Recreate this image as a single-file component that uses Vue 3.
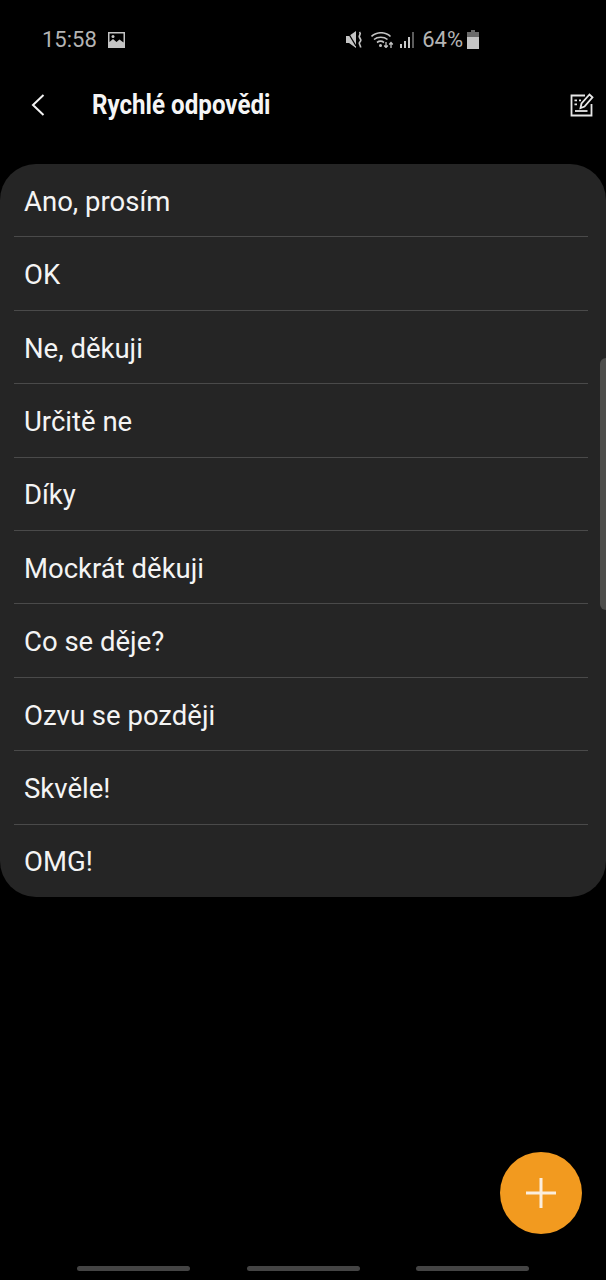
<script setup>
const replies = ['Ano, prosím', 'OK', 'Ne, děkuji', 'Určitě ne', 'Díky', 'Mockrát děkuji', 'Co se děje?', 'Ozvu se později', 'Skvěle!', 'OMG!']
</script>

<template>
  <div class="screen">
    <div class="status">
      <div class="status-left">
        <span class="time">15:58</span>
        <svg class="pic" width="17" height="16" viewBox="0 0 17 16">
          <path fill="#c4c4c4" fill-rule="evenodd" d="M0 0h17v16H0zM1.500 1.500v8.500l3.500-3 3.500 3 3-2.500 4 3V1.500z" />
          <circle cx="5" cy="4.500" r="1.500" fill="#c4c4c4" />
        </svg>
      </div>
      <div class="status-right">
        <svg width="17" height="17" viewBox="0 0 17 17" class="mute">
          <path fill="#c4c4c4" d="M0 5h3L10 0v17L3 12H0z" />
          <path fill="none" stroke="#000" stroke-width="1.300" d="M1 0l9 15" />
          <path fill="none" stroke="#c4c4c4" stroke-width="1.700" d="M13.500 1c2.500 2.500-1.500 3 0 5.500s2 2.500 0 5c-1 2 1.500 2.500 1 5" />
        </svg>
        <svg width="23" height="16" viewBox="0 0 23 16" class="wifi">
          <path fill="none" stroke="#c4c4c4" stroke-width="1.600" d="M.5 4.500c5-5 14-5 19 0M3 7.500c3.500-3 10-3 13.500 0M6 10.500c2-1.500 5-1.500 7 0" />
          <circle cx="9.500" cy="13.500" r="1.500" fill="#c4c4c4" />
          <path fill="none" stroke="#c4c4c4" stroke-width="1.300" d="M15 10v5.500M13.200 13.500l1.800 2 1.800-2M20 16v-5.500M18.200 12.500l1.800-2 1.800 2" />
        </svg>
        <svg width="14" height="16" viewBox="0 0 14 16" class="signal">
          <rect x="0" y="12" width="2" height="4" fill="#c8c8c8" />
          <rect x="4" y="9" width="2" height="7" fill="#c8c8c8" />
          <rect x="8" y="5" width="2" height="11" fill="#c8c8c8" />
          <rect x="12" y="0" width="2" height="16" fill="#5c5c5c" />
        </svg>
        <span class="pct">64%</span>
        <svg width="12" height="19" viewBox="0 0 12 19" class="batt">
          <path fill="#6a6a6a" d="M4 0h4v2h4v5H0V2h4z" />
          <path fill="#c4c4c4" d="M0 7h12v12H0z" />
        </svg>
      </div>
    </div>

    <header class="bar">
      <svg class="back" width="14" height="22" viewBox="0 0 14 22">
        <path fill="none" stroke="#f2f2f2" stroke-width="2" d="M12.500 1 2 11l10.500 10" />
      </svg>
      <h1 class="title">Rychlé odpovědi</h1>
      <svg class="edit" width="24" height="24" viewBox="0 0 24 24">
        <path fill="none" stroke="#e6e6e6" stroke-width="1.800" d="M15 2.500H1.500v20h20V11" />
        <path fill="none" stroke="#e6e6e6" stroke-width="1.800" d="M5 18h12.500" />
        <path fill="#e6e6e6" d="M4.500 6.500H7v1.800H4.500zM4.500 10.500H7v1.800H4.500zM9 6.500h2v1.800H9z" />
        <path fill="none" stroke="#e6e6e6" stroke-width="1.800" d="M10.500 15l1-4.500L19.500 1.500l3 2.800L14.500 13.500z" />
      </svg>
    </header>

    <ul class="card">
      <li v-for="r in replies" :key="r" class="row"><span class="label">{{ r }}</span></li>
    </ul>

    <div class="scrollbar"></div>

    <button class="fab" aria-label="Přidat">
      <svg width="30" height="30" viewBox="0 0 30 30">
        <path stroke="#fbeedd" stroke-width="3" d="M15 0v30M0 15h30" />
      </svg>
    </button>

    <div class="nav">
      <span class="pill"></span><span class="pill"></span><span class="pill"></span>
    </div>
  </div>
</template>

<style>
html, body { margin: 0; background: #000; }
</style>

<style scoped>
.screen {
  position: relative;
  width: 606px;
  height: 1280px;
  background: #000;
  overflow: hidden;
  font-family: Roboto, "Liberation Sans", sans-serif;
  color: #f2f2f2;
}
.status {
  height: 64px;
  padding: 16px 127px 0 42px;
  box-sizing: border-box;
  display: flex;
  justify-content: space-between;
  align-items: flex-start;
}
.status-left, .status-right { display: flex; align-items: center; height: 47px; }
.time { font-size: 22px; color: #b4b4b4; line-height: 47px; }
.pic { margin-left: 11px; }
.mute { margin-right: 8px; }
.signal { margin-left: 6px; margin-right: 8px; }
.pct { font-size: 22px; color: #b4b4b4; }
.batt { margin-left: 4px; }
.bar {
  height: 82px;
  padding: 0 12px 0 31px;
  display: flex;
  align-items: center;
  box-sizing: border-box;
}
.back { flex: none; }
.title {
  margin: 0 0 0 47px;
  flex: 1;
  font-size: 27px;
  font-weight: 700;
  color: #f5f5f5;
  transform: scaleX(0.895);
  transform-origin: left center;
}
.edit { flex: none; }
.card {
  list-style: none;
  margin: 18px 0 0;
  padding: 0;
  height: 733px;
  background: #252525;
  border-radius: 36px;
  overflow: hidden;
  display: flex;
  flex-direction: column;
}
.row {
  flex: 1;
  margin: 0 18px 0 14px;
  padding: 2px 0 0 10px;
  display: flex;
  align-items: center;
  border-bottom: 1px solid #4a4a4a;
  font-size: 27.5px;
  color: #f4f4f4;
}
.row:last-child { border-bottom: 0; }
.scrollbar {
  position: absolute;
  right: 0;
  top: 358px;
  width: 6px;
  height: 252px;
  border-radius: 6px 0 0 6px;
  background: #4d4d4b;
}
.fab {
  position: absolute;
  left: 500px;
  top: 1152px;
  width: 82px;
  height: 82px;
  border: 0;
  padding: 0;
  border-radius: 50%;
  background: #f29a1f;
  display: flex;
  align-items: center;
  justify-content: center;
}
.nav {
  position: absolute;
  left: 77px;
  top: 1266px;
  width: 452px;
  display: flex;
  justify-content: space-between;
}
.pill {
  width: 113px;
  height: 5px;
  border-radius: 3px;
  background: #444;
}
</style>
